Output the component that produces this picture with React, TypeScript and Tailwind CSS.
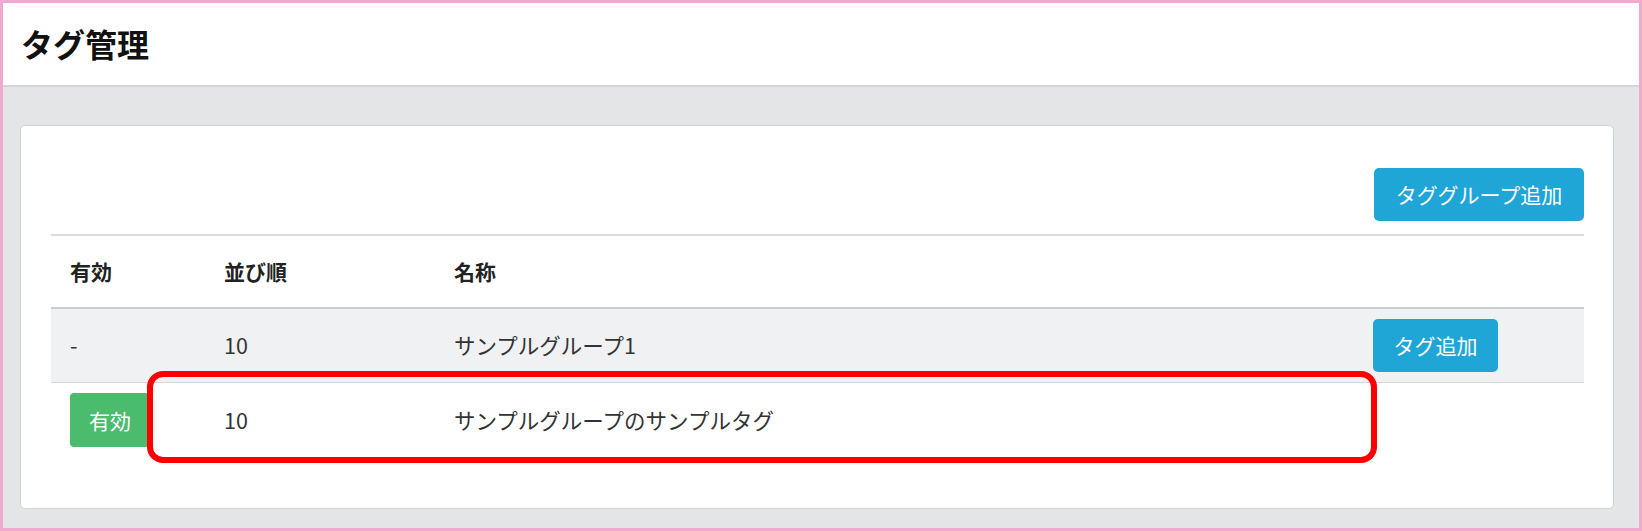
import React from "react";

const font = { fontFamily: '"Noto Sans CJK JP", "Noto Sans", sans-serif' };

interface Row {
  active: boolean | null;
  order: number;
  name: string;
  isGroup: boolean;
}

const rows: Row[] = [
  { active: null, order: 10, name: "サンプルグループ1", isGroup: true },
  { active: true, order: 10, name: "サンプルグループのサンプルタグ", isGroup: false },
];

export default function App() {
  return (
    <div
      className="relative w-[1642px] h-[531px] border-[3px] border-[#f2a9d0] bg-[#e4e5e7] flex flex-col overflow-hidden"
      style={font}
    >
      {/* Page header */}
      <header className="h-[84px] shrink-0 bg-white border-b-2 border-[#d3d5d8] flex items-center pl-[18px]">
        <h1 className="text-[32px] font-bold text-[#111] leading-none -mt-[2px]">タグ管理</h1>
      </header>

      {/* Content */}
      <div className="flex-1 pl-[17px] pr-[25px] pt-[38px] pb-[19px]">
        <div className="h-full bg-white border border-[#cfd3d8] rounded-[5px] pl-[30px] pr-[29px] pt-[42px]">
          <div className="flex justify-end mb-[13px]">
            <button className="h-[53px] w-[210px] bg-[#20a5d7] rounded-[5px] text-white text-[21px] leading-none">
              タググループ追加
            </button>
          </div>

          <div className="border-t-2 border-[#d8dbdf]">
            {/* Header */}
            <div className="grid grid-cols-[154px_230px_1fr_211px] h-[73px] items-center border-b-2 border-[#c9cdd2] text-[21px] font-bold text-[#222]">
              <div className="pl-[19px]">有効</div>
              <div className="pl-[19px]">並び順</div>
              <div className="pl-[19px]">名称</div>
              <div />
            </div>

            {rows.map((r, i) => (
              <div
                key={i}
                className={`grid grid-cols-[154px_230px_1fr_211px] h-[74px] items-center text-[21.5px] text-[#333] ${
                  r.isGroup ? "bg-[#f0f1f3] border-b border-[#d3d6da]" : ""
                }`}
              >
                <div className="pl-[19px]">
                  {r.active === null ? (
                    "-"
                  ) : (
                    <span className="inline-flex items-center justify-center h-[54px] w-[80px] bg-[#4bbb6e] rounded-[4px] text-white text-[21px] leading-none">
                      有効
                    </span>
                  )}
                </div>
                <div className="pl-[19px]">{r.order}</div>
                <div className="pl-[19px]">{r.name}</div>
                <div>
                  {r.isGroup && (
                    <button className="h-[53px] w-[125px] bg-[#20a5d7] rounded-[5px] text-white text-[21px] leading-none">
                      タグ追加
                    </button>
                  )}
                </div>
              </div>
            ))}
          </div>
        </div>
      </div>

      {/* Annotation highlight */}
      <div className="absolute left-[144px] top-[368px] w-[1230px] h-[92px] border-[6px] border-[#ff0000] rounded-[16px] pointer-events-none" />
    </div>
  );
}
